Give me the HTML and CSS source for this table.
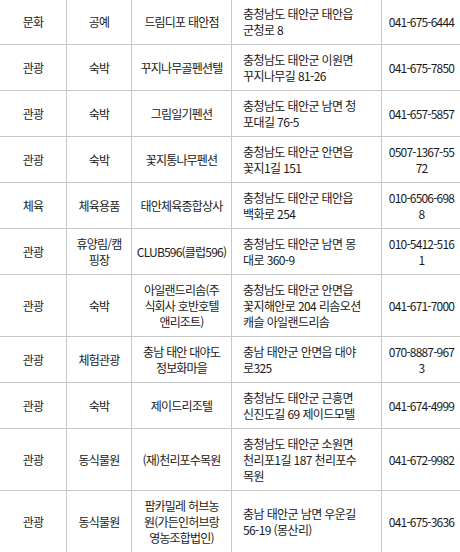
FILE: index.html
```html
<!DOCTYPE html>
<html lang="ko">
<head>
<meta charset="utf-8">
<title>태안군 업소 목록</title>
<link rel="stylesheet" href="styles.css">
</head>
<body>
<div class="list">
  <div class="cell">문화</div><div class="cell">공예</div><div class="cell">드림디포 태안점</div><div class="cell addr">충청남도 태안군 태안읍<br>군청로 8</div><div class="cell tel">041-675-6444</div>
  <div class="cell">관광</div><div class="cell">숙박</div><div class="cell">꾸지나무골펜션텔</div><div class="cell addr">충청남도 태안군 이원면<br>꾸지나무길 81-26</div><div class="cell tel">041-675-7850</div>
  <div class="cell">관광</div><div class="cell">숙박</div><div class="cell">그림일기펜션</div><div class="cell addr">충청남도 태안군 남면 청<br>포대길 76-5</div><div class="cell tel">041-657-5857</div>
  <div class="cell">관광</div><div class="cell">숙박</div><div class="cell">꽃지통나무펜션</div><div class="cell addr">충청남도 태안군 안면읍<br>꽃지1길 151</div><div class="cell tel">0507-1367-55<br>72</div>
  <div class="cell">체육</div><div class="cell">체육용품</div><div class="cell">태안체육종합상사</div><div class="cell addr">충청남도 태안군 태안읍<br>백화로 254</div><div class="cell tel">010-6506-698<br>8</div>
  <div class="cell">관광</div><div class="cell">휴양림/캠<br>핑장</div><div class="cell">CLUB596(클럽596)</div><div class="cell addr">충청남도 태안군 남면 몽<br>대로 360-9</div><div class="cell tel">010-5412-516<br>1</div>
  <div class="cell">관광</div><div class="cell">숙박</div><div class="cell">아일랜드리솜(주<br>식회사 호반호텔<br>앤리조트)</div><div class="cell addr">충청남도 태안군 안면읍<br>꽃지해안로 204 리솜오션<br>캐슬 아일랜드리솜</div><div class="cell tel">041-671-7000</div>
  <div class="cell">관광</div><div class="cell">체험관광</div><div class="cell">충남 태안 대야도<br>정보화마을</div><div class="cell addr">충남 태안군 안면읍 대야<br>로325</div><div class="cell tel">070-8887-967<br>3</div>
  <div class="cell">관광</div><div class="cell">숙박</div><div class="cell">제이드리조텔</div><div class="cell addr">충청남도 태안군 근흥면<br>신진도길 69 제이드모텔</div><div class="cell tel">041-674-4999</div>
  <div class="cell">관광</div><div class="cell">동식물원</div><div class="cell">(재)천리포수목원</div><div class="cell addr">충청남도 태안군 소원면<br>천리포1길 187 천리포수<br>목원</div><div class="cell tel">041-672-9982</div>
  <div class="cell">관광</div><div class="cell">동식물원</div><div class="cell">팜카밀레 허브농<br>원(가든인허브랑<br>영농조합법인)</div><div class="cell addr">충남 태안군 남면 우운길<br>56-19 (몽산리)</div><div class="cell tel">041-675-3636</div>
</div>
</body>
</html>
```

FILE: styles.css
```css
html, body {
  margin: 0;
  padding: 0;
  background: #fff;
  overflow: hidden;
}

.list {
  display: grid;
  grid-template-columns: 66px 64px 99px 149px 79px;
  gap: 1px;
  background: #c8c8c8;
  margin-top: -1px;
  width: 461px;
  font-family: "Noto Sans CJK KR", "Noto Sans", sans-serif;
  font-size: 12px;
  line-height: 16px;
  letter-spacing: -0.8px;
  color: #1a1a1a;
}

.cell {
  background: #fff;
  display: flex;
  align-items: center;
  justify-content: center;
  text-align: center;
  white-space: nowrap;
  padding: 7px 0 6px;
}

.addr {
  justify-content: flex-start;
  text-align: left;
  padding-left: 11px;
  letter-spacing: -0.6px;
}
```
